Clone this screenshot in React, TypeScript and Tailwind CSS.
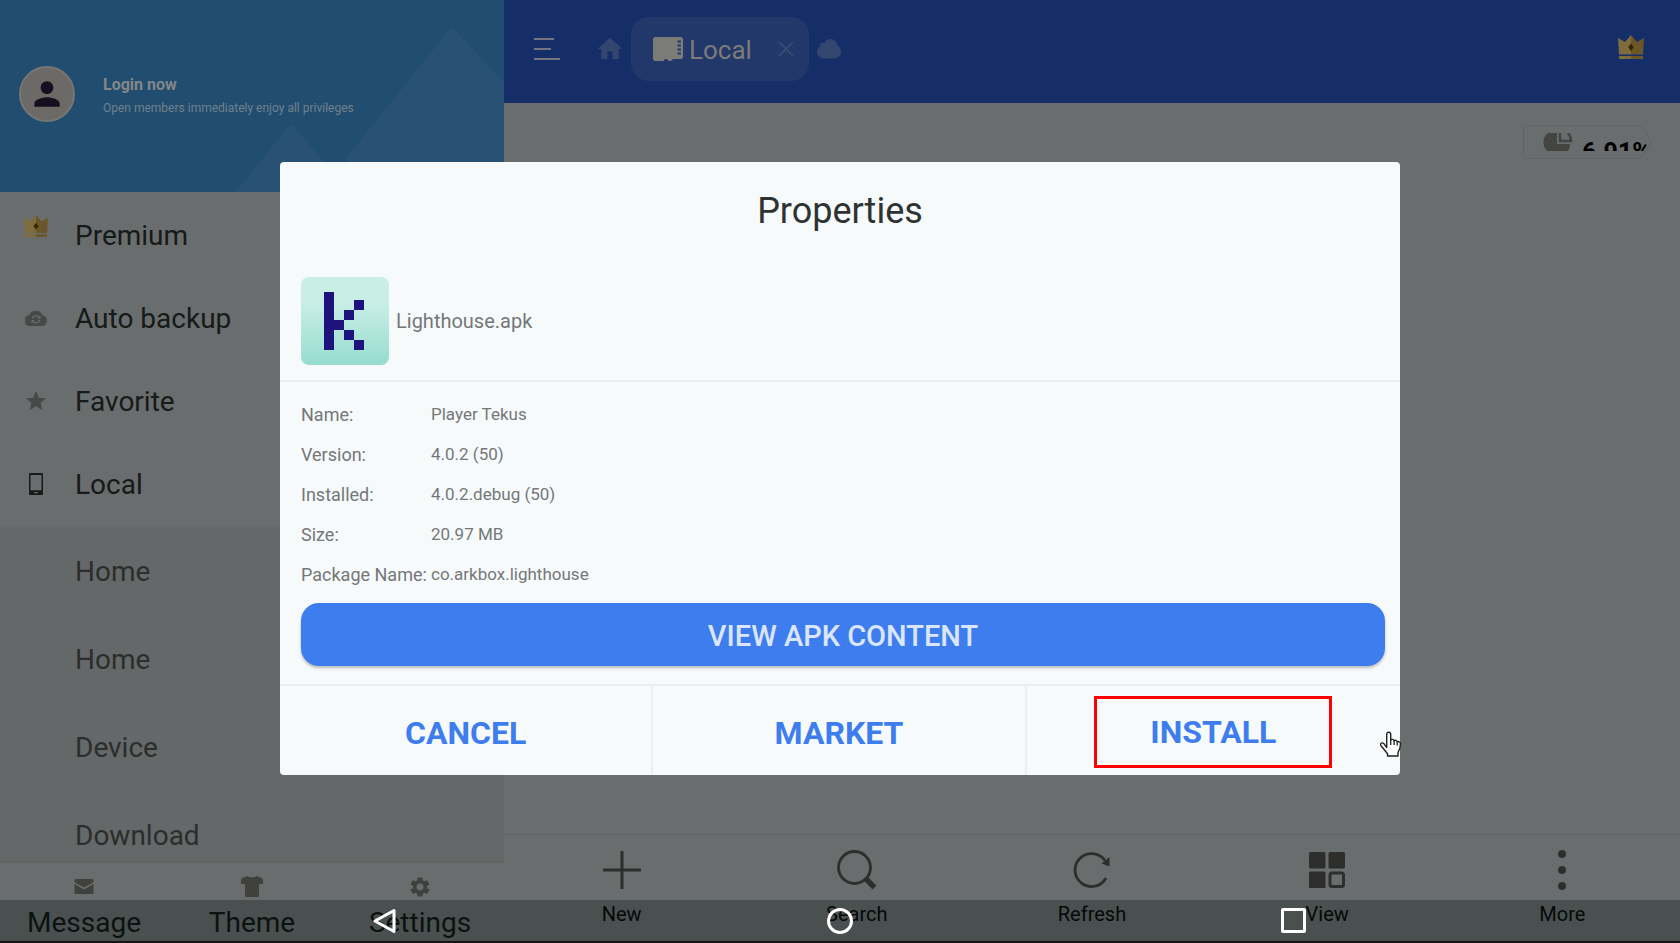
import { FC, ReactNode } from "react"
import { MdHome, MdPerson, MdSettings, MdStar } from "react-icons/md"

type IconProps = { className?: string }

const CrownIcon: FC<IconProps> = ({ className }) => (
  <svg viewBox="0 0 26 24" className={className} aria-hidden="true">
    <path d="M0 3l7 4L13 0v19.500H1z" fill="#7f6c3c" />
    <path d="M26 3l-7 4L13 0v19.500h12z" fill="#6b5628" />
    <path d="M1 21h12v3H1z" fill="#7f6c3c" />
    <path d="M13 21h12v3H13z" fill="#6b5628" />
    <path d="M13 8.500l2.700 3.700-2.700 3.700-2.700-3.700z" fill="#362600" />
  </svg>
)

const BackupIcon: FC<IconProps> = ({ className }) => (
  <svg viewBox="0 0 22 16" className={className} aria-hidden="true">
    <path
      d="M17.500 5.500A7 7 0 0 0 4.500 5 5.500 5.500 0 0 0 5.500 16h11.300a5.300 5.300 0 0 0 .7-10.500z"
      fill="currentColor"
    />
    <path
      d="M7.200 8.500a4 4 0 0 1 7-1M14.800 10a4 4 0 0 1-7 1.300"
      fill="none"
      stroke="#696d6e"
      strokeWidth="1.300"
    />
    <path d="M15.500 5.500v3.300h-3.300zM6.500 13.200V9.900h3.300z" fill="#696d6e" />
  </svg>
)

const PhoneIcon: FC<IconProps> = ({ className }) => (
  <svg viewBox="0 0 14 22" className={className} aria-hidden="true">
    <path
      fillRule="evenodd"
      d="M1.500 0h11A1.300 1.300 0 0 1 14 1.300v19.400a1.300 1.300 0 0 1-1.300 1.300H1.300A1.300 1.300 0 0 1 0 20.700V1.300A1.300 1.300 0 0 1 1.500 0zM1.500 2v15.300h11V2zM5.200 19v1.300h3.600V19z"
      fill="currentColor"
    />
  </svg>
)

const CloudIcon: FC<IconProps> = ({ className }) => (
  <svg viewBox="0 0 24 20" className={className} aria-hidden="true">
    <path
      d="M13.500 0c4 0 6.500 3 6.700 6.300C22.800 7.300 24 9.700 24 12.500c0 4-3 7-6.500 7h-11C2.800 19.500 0 16.500 0 13c0-2.300 1-4.300 2.600-5.500C2.500 5 4.800 3.300 7.500 4 8.700 1.500 10.800 0 13.500 0z"
      fill="currentColor"
    />
  </svg>
)

const MailIcon: FC<IconProps> = ({ className }) => (
  <svg viewBox="0 0 20 15" className={className} aria-hidden="true">
    <path
      d="M2 0h16a1.500 1.500 0 0 1 1.500 1.500v1.700L10 8.500.5 3.200V1.500A1.500 1.500 0 0 1 2 0zM.5 5L10 10.500 19.500 5v9a1 1 0 0 1-1 1h-17a1 1 0 0 1-1-1z"
      fill="currentColor"
    />
  </svg>
)

const ShirtIcon: FC<IconProps> = ({ className }) => (
  <svg viewBox="0 0 22 21" className={className} aria-hidden="true">
    <path
      d="M6.500 0c1.500 1.700 7.500 1.700 9 0l5 2c1 .5 1.500 1.200 1.500 2.300V8h-4v11.500a1.500 1.500 0 0 1-1.500 1.500h-11A1.500 1.500 0 0 1 4 19.500V8H0V4.300C0 3.200.5 2.500 1.500 2z"
      fill="currentColor"
    />
  </svg>
)

const SdCardIcon: FC<IconProps> = ({ className }) => (
  <svg viewBox="0 0 30 24" className={className} aria-hidden="true">
    <path
      d="M2.500 0h25A2.500 2.500 0 0 1 30 2.500V20a2 2 0 0 1-2 2h-8l-2 2h-2.500l-1.500-2h-2l-1.500 2H2.500A2.500 2.500 0 0 1 0 21.500v-19A2.500 2.500 0 0 1 2.500 0z"
      fill="currentColor"
    />
    <path
      d="M24.500 4.500H28M24.500 8.500H28M24.500 12.500H28M24.500 16.500H28"
      stroke="#22386a"
      strokeWidth="2"
    />
  </svg>
)

const PieIcon: FC<IconProps> = ({ className }) => (
  <svg viewBox="0 0 30 18" className={className} aria-hidden="true">
    <path d="M5 0h9v11h13c0 3-1 5-2 7H4C-1 12-1 5 5 0z" fill="#444441" />
    <path
      d="M17 0v8h11c0-4-1-6-3-8"
      fill="none"
      stroke="#444441"
      strokeWidth="2.500"
    />
  </svg>
)

const PlusIcon = () => (
  <svg viewBox="0 0 38 38" className="size-[38px]" aria-hidden="true">
    <path d="M19 0v38M0 19h38" stroke="currentColor" strokeWidth="3" />
  </svg>
)

const SearchIcon = () => (
  <svg viewBox="0 0 40 40" className="size-10" aria-hidden="true">
    <circle cx="17.500" cy="17.500" r="16" fill="none" stroke="currentColor" strokeWidth="2.800" />
    <path d="M29 29l8.500 8.500" stroke="currentColor" strokeWidth="5.500" />
  </svg>
)

const RefreshIcon = () => (
  <svg viewBox="0 0 38 38" className="size-[38px]" aria-hidden="true">
    <path
      d="M33 27A16.500 16.500 0 1 1 32 9.500"
      fill="none"
      stroke="currentColor"
      strokeWidth="2.800"
    />
    <path d="M36.500 6v9.500l-8-3z" fill="currentColor" />
  </svg>
)

const ViewIcon = () => (
  <svg viewBox="0 0 36 36" className="size-9" aria-hidden="true">
    <g fill="currentColor">
      <rect width="16.500" height="16.500" rx="1.500" />
      <rect x="19.500" width="16.500" height="16.500" rx="1.500" />
      <rect y="19.500" width="16.500" height="16.500" rx="1.500" />
    </g>
    <rect
      x="21"
      y="21"
      width="13.500"
      height="13.500"
      rx="2"
      fill="none"
      stroke="currentColor"
      strokeWidth="3"
    />
  </svg>
)

const MoreIcon = () => (
  <svg viewBox="0 0 8 40" className="h-10 w-2" fill="currentColor" aria-hidden="true">
    <circle cx="4" cy="4" r="4" />
    <circle cx="4" cy="20" r="4" />
    <circle cx="4" cy="36" r="4" />
  </svg>
)

const HandCursor: FC<IconProps> = ({ className }) => (
  <svg viewBox="0 0 24 26" className={className} aria-hidden="true">
    <path
      d="M8.700 16.500V3.200c0-2.700 4-2.700 4 0v6c.6-1.300 3.200-1 3.400.6.900-.9 2.900-.5 3.100 1 1.200-.7 3.300 0 3.300 1.900 0 4.300-1 6.300-2.500 9V25H9.500v-2.300C8 21 5.800 18 3.400 15.200 1.200 12.600 4 10.800 6 12.800z"
      fill="#fff"
      stroke="#222"
      strokeWidth="1.400"
      strokeLinejoin="round"
    />
    <path d="M12.700 9v5M16.100 10v4M19.200 11v3.500" stroke="#222" strokeWidth="1.300" />
  </svg>
)

const menu: { label: string; icon: ReactNode }[] = [
  { label: "Premium", icon: <CrownIcon className="mb-[18px] h-[22px] w-6" /> },
  { label: "Auto backup", icon: <BackupIcon className="h-4 w-[22px] text-[#464946]" /> },
  { label: "Favorite", icon: <MdStar className="size-6 text-[#464946]" /> },
  { label: "Local", icon: <PhoneIcon className="h-[22px] w-3.5 text-[#161a18]" /> },
]

const folders = ["Home", "Home", "Device", "Download"]

const shortcuts = [
  { label: "Message", icon: <MailIcon className="h-[15px] w-5" /> },
  { label: "Theme", icon: <ShirtIcon className="h-[21px] w-[22px]" /> },
  { label: "Settings", icon: <MdSettings className="size-6" /> },
]

const tools = [
  { label: "New", icon: <PlusIcon /> },
  { label: "Search", icon: <SearchIcon /> },
  { label: "Refresh", icon: <RefreshIcon /> },
  { label: "View", icon: <ViewIcon /> },
  { label: "More", icon: <MoreIcon /> },
]

const details = [
  ["Name:", "Player Tekus"],
  ["Version:", "4.0.2 (50)"],
  ["Installed:", "4.0.2.debug (50)"],
  ["Size:", "20.97 MB"],
  ["Package Name:", "co.arkbox.lighthouse"],
]

const Sidebar = () => (
  <aside className="flex w-[30%] flex-col">
    <div className="relative h-48 shrink-0 overflow-hidden bg-[#214d71]">
      <svg
        viewBox="0 0 268 165"
        className="absolute right-0 bottom-0 h-[165px] w-[268px]"
        aria-hidden="true"
      >
        <path d="M0 165L52 100q3-4 6 0l56 65zM111 165v-35L213 3q3-4 6 0l49 52v110z" fill="#295173" />
      </svg>
      <a href="#login" className="relative flex h-full items-center gap-7 pb-1 pl-[19px]">
        <span className="flex size-14 items-center justify-center rounded-full border-2 border-[#767775] bg-[#6b6a66] text-[#150f20]">
          <MdPerson className="size-[38px]" />
        </span>
        <span className="flex flex-col gap-[3px] pt-[5px]">
          <span className="text-base leading-5 font-bold text-[#848688]">Login now</span>
          <span className="text-xs leading-5 text-[#71808a]">
            Open members immediately enjoy all privileges
          </span>
        </span>
      </a>
    </div>
    <nav className="flex min-h-0 flex-1 flex-col overflow-hidden pt-0.5 text-[28px]">
      {menu.map(({ label, icon }) => (
        <a key={label} href={`#${label}`} className="flex h-[83px] shrink-0 items-center text-[#161a18]">
          <span className="flex w-[75px] justify-center pr-1 pb-0.5">{icon}</span>
          {label}
        </a>
      ))}
      <div className="min-h-0 flex-1 overflow-hidden bg-[#646869] pt-0.5 text-[#2b2e2c]">
        {folders.map((label, i) => (
          <a key={i} href={`#${label}`} className="flex h-[88px] items-center pl-[75px]">
            {label}
          </a>
        ))}
      </div>
    </nav>
    <div className="grid h-[82px] shrink-0 grid-cols-3 border-t-2 border-[#636462] text-[28px] text-[#0c0e0d]">
      {shortcuts.map(({ label, icon }) => (
        <button key={label} className="flex flex-col items-center">
          <span className="flex h-[47px] items-center text-[#40413d]">{icon}</span>
          <span className="leading-[26px]">{label}</span>
        </button>
      ))}
    </div>
  </aside>
)

const TopBar = () => (
  <header className="flex h-[103px] shrink-0 items-center bg-[#152e68] pr-9 pb-[5px] pl-[30px] text-[#32466f]">
    <button aria-label="Menu" className="mr-[35px] flex w-[26px] flex-col gap-2">
      <span className="h-0.5 w-5 bg-[#70757f]" />
      <span className="h-0.5 w-[17px] bg-[#70757f]" />
      <span className="h-0.5 w-full bg-[#70757f]" />
    </button>
    <button aria-label="Home" className="w-9">
      <MdHome className="size-[30px]" />
    </button>
    <div className="flex h-16 w-[178px] items-center rounded-[18px] bg-[#22386a] pr-4 pl-[22px]">
      <SdCardIcon className="mr-1.5 h-6 w-[30px] text-[#7b7c78]" />
      <span className="flex-1 pt-0.5 text-[26px] text-[#7b7c78]">Local</span>
      <button aria-label="Close tab">
        <svg viewBox="0 0 14 14" className="size-3.5" aria-hidden="true">
          <path d="M0 0l14 14M14 0L0 14" stroke="#3d4e74" strokeWidth="1.500" />
        </svg>
      </button>
    </div>
    <button aria-label="Cloud" className="ml-2">
      <CloudIcon className="h-5 w-6" />
    </button>
    <button aria-label="Premium" className="mb-1 ml-auto">
      <CrownIcon className="h-6 w-[26px]" />
    </button>
  </header>
)

const UsageChip = () => (
  <button aria-label="Storage used" className="relative mt-[22px] mr-7 h-[34px] w-[129px] self-end">
    <svg viewBox="0 0 129 34" className="absolute inset-0 h-full w-full" aria-hidden="true">
      <path
        d="M3 .5h110q4 0 7 3l7 11q2 2.500 0 5l-7 11q-3 3-7 3H3Q.5 33.500.5 31V3Q.5.5 3 .5z"
        fill="none"
        stroke="#606465"
      />
    </svg>
    <span className="relative flex h-[18px] gap-[9px] overflow-hidden pr-1 pl-5">
      <PieIcon className="h-[18px] w-[30px] shrink-0" />
      <span className="pt-1 text-[25px] leading-8 font-bold text-black">6.91%</span>
    </span>
  </button>
)

const ToolBar = () => (
  <footer className="grid h-[109px] shrink-0 grid-cols-5 border-t border-[#5f6364] text-xl text-black">
    {tools.map(({ label, icon }) => (
      <button key={label} className="flex flex-col items-center">
        <span className="flex h-[69px] items-center text-[#2e2f2c]">{icon}</span>
        <span className="leading-5">{label}</span>
      </button>
    ))}
  </footer>
)

const PropertiesDialog = () => (
  <section
    role="dialog"
    aria-labelledby="dialog-title"
    className="relative w-2/3 rounded-sm bg-[#f6fafb] text-[#757778]"
  >
    <h1 id="dialog-title" className="pt-7 pb-[45px] text-center text-4xl leading-[42px] text-[#2f3233]">
      Properties
    </h1>
    <div className="flex items-center gap-[7px] border-b-2 border-[#ebeeef] px-[21px] pb-[15px] text-xl">
      <svg viewBox="0 0 88 88" className="size-[88px]" aria-hidden="true">
        <defs>
          <linearGradient id="tile" x1="0" y1="0" x2="0" y2="1">
            <stop offset="0.3" stopColor="#c8eee6" />
            <stop offset="1" stopColor="#96dccf" />
          </linearGradient>
        </defs>
        <rect width="88" height="88" rx="8" fill="url(#tile)" />
        <g fill="#1e127c">
          <rect x="23" y="15" width="10" height="58" />
          <rect x="33" y="43" width="10" height="10" />
          <rect x="43" y="33" width="10" height="10" />
          <rect x="53" y="23" width="10" height="10" />
          <rect x="43" y="53" width="10" height="10" />
          <rect x="53" y="63" width="10" height="10" />
        </g>
      </svg>
      Lighthouse.apk
    </div>
    <dl className="px-[21px] pt-[13px]">
      {details.map(([term, value]) => (
        <div key={term} className="flex h-10 items-center">
          <dt className="w-[130px] text-lg">{term}</dt>
          <dd className="text-[17px]">{value}</dd>
        </div>
      ))}
    </dl>
    <div className="pt-2 pr-[15px] pb-[18px] pl-[21px]">
      <button className="h-[63px] w-full rounded-[18px] bg-[#3e7dee] pt-1 text-[29px] font-medium text-[#dbe6fc] shadow-[0_2px_3px_rgba(0,0,0,0.25)]">
        VIEW APK CONTENT
      </button>
    </div>
    <div className="grid h-[91px] grid-cols-3 divide-x-2 divide-[#ebeeef] border-t-2 border-[#ebeeef] text-[32px] font-bold text-[#3e7dee]">
      <button className="pt-1">CANCEL</button>
      <button className="pt-1">MARKET</button>
      <div className="flex items-center justify-center pt-0.5">
        <button className="h-[72px] w-[238px] border-3 border-[#ff0000]">INSTALL</button>
      </div>
    </div>
    <HandCursor className="absolute -right-0.5 bottom-[18px] h-[26px] w-6" />
  </section>
)

const NavigationBar = () => (
  <nav className="absolute inset-x-0 bottom-0 flex h-[43px] justify-center border-b-2 border-[#151515] bg-[#0e1917]/35">
    <div className="grid w-[81%] grid-cols-3 place-items-center">
      <button aria-label="Back">
        <svg viewBox="0 0 26 26" className="size-[26px]" aria-hidden="true">
          <path d="M21 2.500v21L2 13z" fill="none" stroke="#fff" strokeWidth="3" strokeLinejoin="round" />
        </svg>
      </button>
      <button aria-label="Home screen" className="size-[26px] rounded-full border-3 border-white" />
      <button aria-label="Recent apps" className="size-[25px] rounded-xs border-3 border-white" />
    </div>
  </nav>
)

export default function App() {
  return (
    <div className="relative flex h-screen overflow-hidden bg-[#696d6e] font-[Roboto,sans-serif]">
      <Sidebar />
      <main className="flex flex-1 flex-col">
        <TopBar />
        <div className="flex flex-1 flex-col">
          <UsageChip />
        </div>
        <ToolBar />
      </main>
      <NavigationBar />
      <div className="absolute inset-0 flex items-center justify-center pb-1.5">
        <PropertiesDialog />
      </div>
    </div>
  )
}
